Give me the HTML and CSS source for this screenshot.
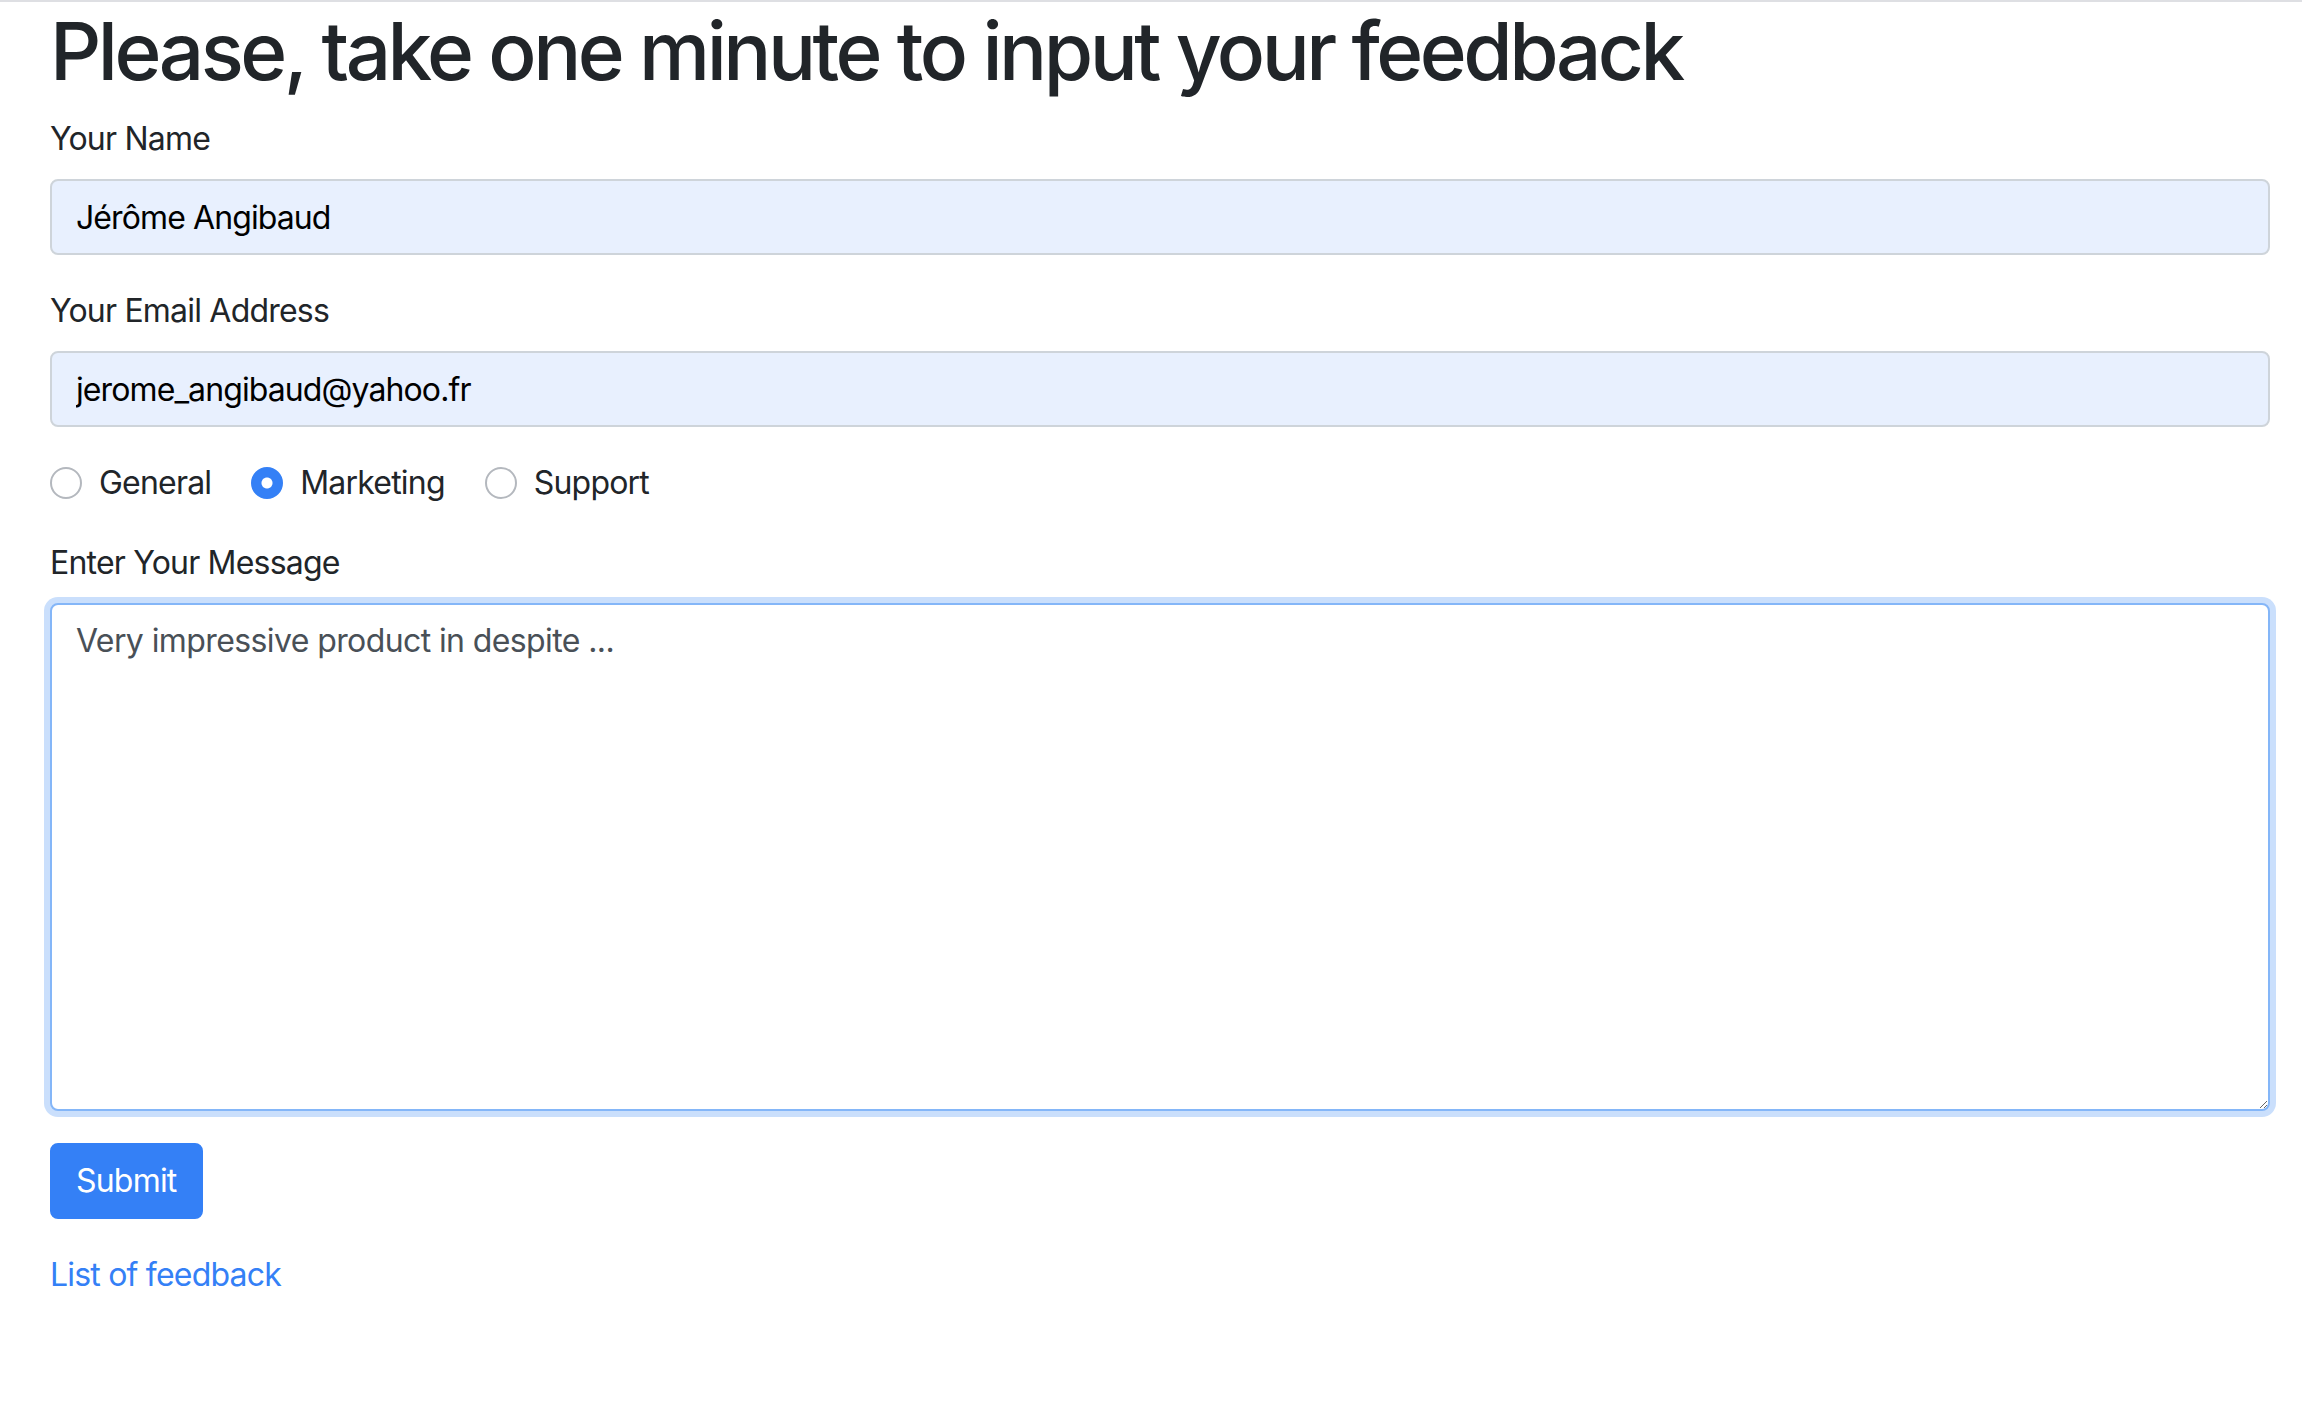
FILE: index.html
```html
<!DOCTYPE html>
<html lang="en">
<head>
<meta charset="utf-8">
<title>Feedback</title>
<link rel="stylesheet" href="styles.css">
</head>
<body>
<div class="topline"></div>
<main class="container">
  <h1 class="title">Please, take one minute to input your feedback</h1>
  <form class="feedback-form">
    <div class="form-group">
      <label class="form-label" for="name">Your Name</label>
      <input class="form-control autofilled" id="name" type="text" value="Jérôme Angibaud">
    </div>
    <div class="form-group">
      <label class="form-label" for="email">Your Email Address</label>
      <input class="form-control autofilled" id="email" type="email" value="jerome_angibaud@yahoo.fr">
    </div>
    <div class="form-group radio-row">
      <label class="radio-option"><input class="radio" type="radio" name="topic" value="general"><span>General</span></label>
      <label class="radio-option"><input class="radio" type="radio" name="topic" value="marketing" checked><span>Marketing</span></label>
      <label class="radio-option"><input class="radio" type="radio" name="topic" value="support"><span>Support</span></label>
    </div>
    <div class="form-group">
      <label class="form-label" for="message">Enter Your Message</label>
      <textarea class="form-control message focused" id="message" rows="10">Very impressive product in despite ...</textarea>
    </div>
    <div class="actions">
      <button class="btn-primary" type="submit">Submit</button>
    </div>
  </form>
  <p class="links"><a class="link" href="#">List of feedback</a></p>
</main>
</body>
</html>
```

FILE: styles.css
```css
html, body {
  margin: 0;
  padding: 0;
  background: #fff;
}

body {
  font-family: Inter, "Liberation Sans", sans-serif;
  font-size: 32px;
  line-height: 48px;
  letter-spacing: -0.8px;
  color: #212529;
}

.topline {
  height: 2px;
  background: #dedfe3;
}

.container {
  padding: 1px 32px 0 50px;
}

.title {
  margin: 0 0 16px;
  font-size: 80px;
  font-weight: 500;
  line-height: 96px;
  letter-spacing: -3.5px;
  color: #212529;
}

.feedback-form {
  margin: 0;
}

.form-group {
  margin-bottom: 32px;
}

.form-label {
  display: block;
  margin-bottom: 16px;
  font-size: 32px;
  line-height: 48px;
  color: #212529;
}

.form-control {
  display: block;
  width: 100%;
  box-sizing: border-box;
  height: 76px;
  margin: 0;
  padding: 12px 24px;
  font-family: Inter, "Liberation Sans", sans-serif;
  font-size: 32px;
  line-height: 48px;
  letter-spacing: -0.9px;
  color: #495057;
  background: #fff;
  border: 2px solid #ced4da;
  border-radius: 8px;
  outline: none;
}

.autofilled {
  background: #e8f0fe;
  color: #000;
}

.message {
  height: 508px;
  resize: vertical;
  letter-spacing: -0.6px;
}

.focused {
  border-color: #84b6f8;
  box-shadow: 0 0 0 6px #cadffc;
}

.radio-row {
  display: flex;
  align-items: center;
  height: 48px;
}

.radio-option {
  display: flex;
  align-items: center;
  margin-right: 40px;
  font-size: 32px;
  line-height: 48px;
  color: #212529;
}

.radio {
  appearance: none;
  -webkit-appearance: none;
  width: 32px;
  height: 32px;
  margin: 0 17px 0 0;
  box-sizing: border-box;
  border: 2px solid #b4b8be;
  border-radius: 50%;
  background: #fff;
}

.radio:checked {
  border-color: #3480f6;
  background: radial-gradient(circle, #fff 0 5px, #3480f6 6px);
}

.actions {
  display: flex;
}

.btn-primary {
  padding: 12px 24px;
  font-family: Inter, "Liberation Sans", sans-serif;
  font-size: 32px;
  line-height: 48px;
  letter-spacing: -0.8px;
  font-weight: 400;
  color: #fff;
  background: #3480f6;
  border: 2px solid #3480f6;
  border-radius: 8px;
}

.links {
  margin: 32px 0 0;
}

.link {
  color: #3480f6;
  text-decoration: none;
}
```
